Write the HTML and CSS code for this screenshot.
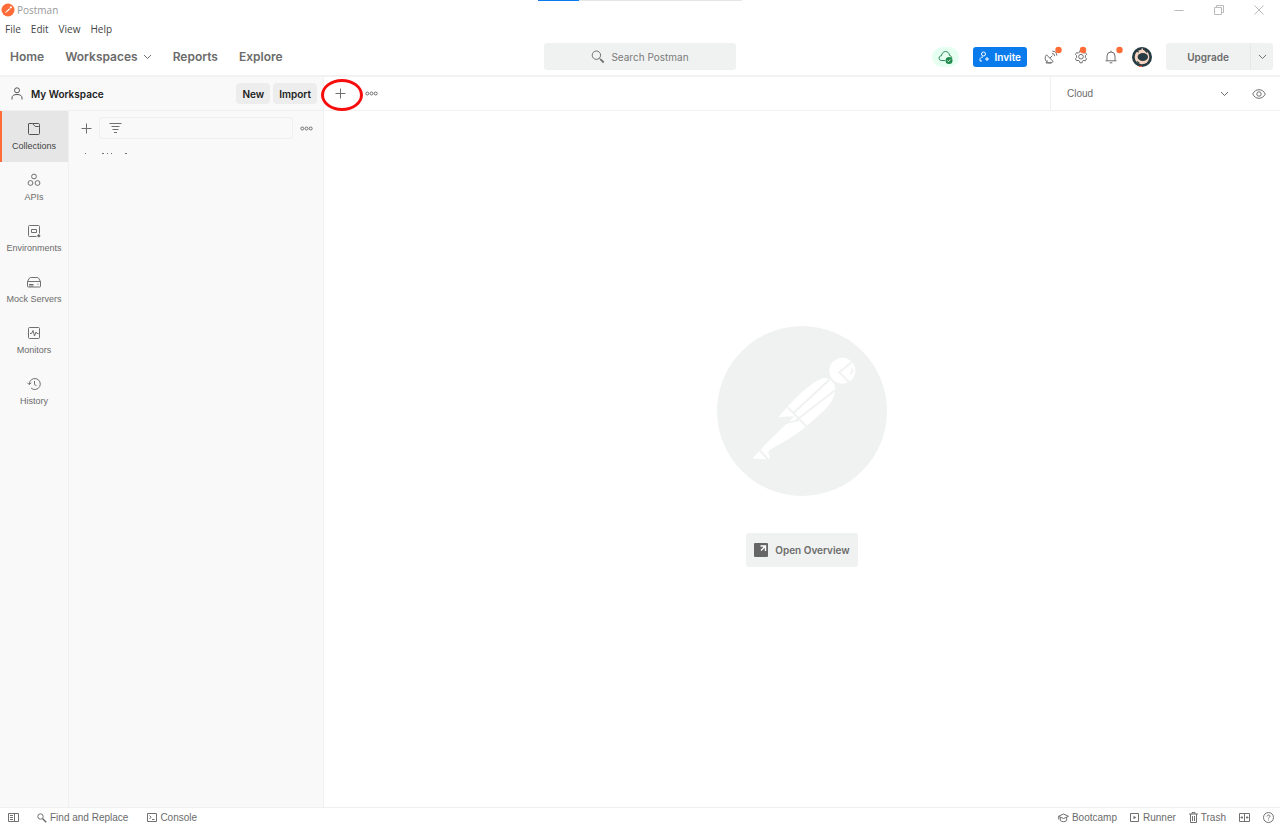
FILE: index.html
```
<!DOCTYPE html>
<html lang="en">
<head>
<meta charset="utf-8">
<title>Postman</title>
<link rel="stylesheet" href="styles.css">
</head>
<body>
<div class="app">
  <div class="load-bar"><div class="load-bar-fill"></div></div>

  <header class="titlebar">
    <svg class="app-logo" width="14" height="14" viewBox="0 0 14 14"><circle cx="7" cy="7" r="6.5" fill="#ff6c37"/><path d="M3.6 10.4 5.2 8.3 8.2 5.2 9.2 6.2 6.2 8.7Z" fill="#fff"/><circle cx="9.8" cy="4.3" r="1.1" fill="#fff"/></svg>
    <span class="app-title">Postman</span>
    <div class="window-controls">
      <button aria-label="Minimize"><svg width="10" height="10" viewBox="0 0 10 10"><path d="M.5 5.5h9"/></svg></button>
      <button aria-label="Restore"><svg width="10" height="10" viewBox="0 0 10 10"><path d="M.5 2.500h7v7h-7zM2.500 2.500v-2h7v7h-2"/></svg></button>
      <button aria-label="Close"><svg width="10" height="10" viewBox="0 0 10 10"><path d="m.5.5 9 9m0-9-9 9"/></svg></button>
    </div>
  </header>

  <div class="menubar">
    <button>File</button><button>Edit</button><button>View</button><button>Help</button>
  </div>

  <nav class="topnav">
    <div class="nav-links">
      <a href="#">Home</a>
      <button class="nav-drop">Workspaces <svg width="9" height="6" viewBox="0 0 9 6"><path d="m1 1 3.500 3.500L8 1"/></svg></button>
      <a href="#">Reports</a>
      <a href="#">Explore</a>
    </div>
    <button class="search">
      <svg width="14" height="14" viewBox="0 0 14 14"><circle cx="5.400" cy="5.200" r="4.200"/><path d="m8.400 8.200 1.200 1.200"/><path d="m9.300 9.100 3.400 3.400" stroke-width="1.800"/></svg>
      Search Postman
    </button>
    <div class="nav-tools">
      <button class="sync" aria-label="Sync status"><svg width="15" height="14" viewBox="0 0 15 14"><path d="M7 10.500H3.200a2.400 2.400 0 0 1-.4-4.700h.7C3.700 3.300 5.400 1.500 7.500 1.500c2.200 0 3.900 1.700 4 4 1.300.2 2.300 1.100 2.300 2.500" fill="none" stroke="#2f8a5b"/><circle cx="11" cy="10.500" r="3.500" fill="#1f8a4c" stroke="none"/><path d="m9.400 10.500 1.200 1.200 2-2.100" fill="none" stroke="#d8f5e5"/></svg></button>
      <button class="invite"><svg width="11" height="11" viewBox="0 0 11 11"><circle cx="4.500" cy="3" r="2"/><path d="M1 10V8.500c0-1.600 1.200-2.500 3-2.500M1 10h2M6 8h4M8 6v4"/></svg>Invite</button>
      <div class="tool-icons">
        <button aria-label="Capture requests"><svg width="14" height="14" viewBox="0 0 14 14"><path d="M2.500 4.800a4.300 4.300 0 0 0 6.700 6.700ZM5.800 8.200 8.300 5.700M3.500 10.500 2 13h5.500L6.500 11.800M8 3.500a2.500 2.500 0 0 1 2.600 2.600M8.400 1.200a4.500 4.500 0 0 1 4.400 4.400"/><circle class="dot" cx="14.500" cy="0" r="3.200"/></svg></button>
        <button aria-label="Settings"><svg width="14" height="14" viewBox="0 0 14 14"><path d="M5.600 2.200 5.900.7h2.200l.3 1.500 1.500.9 1.500-.5 1.200 1.900L11.400 5.600v2l1.200 1.200-1.200 2-1.500-.5-1.500.9-.3 1.600H5.900l-.3-1.600-1.500-.9-1.500.5-1.200-2 1.200-1.200v-2L1.400 4.500l1.200-1.900 1.500.5Z"/><circle cx="7" cy="6.700" r="2.300"/><circle class="dot" cx="9" cy="0" r="3.200"/></svg></button>
        <button aria-label="Notifications"><svg width="14" height="14" viewBox="0 0 14 14"><path d="M1.500 10.800h11M3 10.800V6a3.700 3.700 0 0 1 8 0v4.800M7 2.200V.7M5.700 12.800h2.600"/><circle class="dot" cx="15.500" cy="0" r="3.200"/></svg></button>
      </div>
      <button class="avatar" aria-label="Account"><svg width="20" height="20" viewBox="0 0 20 20"><circle cx="10" cy="10" r="10" fill="#263b42"/><circle cx="10" cy="10" r="7.300" fill="#f7d5c2"/><ellipse cx="10.800" cy="10" rx="5.200" ry="4" fill="#263b42"/><path d="M3.500 4 7 5M12.500 2.500 15 5.500M5 14.500l2.500 2" stroke="#263b42" stroke-width="1.200"/><path d="M9.500 2.500h1.500" stroke="#f7d5c2" stroke-width="2"/><path d="M7 19.400h3" stroke="#f15a3d" stroke-width="1.200"/></svg></button>
      <div class="upgrade"><button class="upgrade-main">Upgrade</button><button class="upgrade-more" aria-label="More plans"><svg width="9" height="6" viewBox="0 0 9 6"><path d="m1 1 3.500 3.500L8 1"/></svg></button></div>
    </div>
  </nav>

  <div class="workbench">
    <aside class="sidebar">
      <div class="workspace-head">
        <svg width="12" height="13" viewBox="0 0 12 13"><circle cx="6" cy="3.300" r="2.500"/><path d="M1 12.500V11c0-2.300 1.800-3.500 5-3.500s5 1.200 5 3.500v1.500"/></svg>
        <h1>My Workspace</h1>
        <button class="chip">New</button>
        <button class="chip">Import</button>
      </div>
      <div class="sidebar-body">
        <nav class="rail">
          <a class="rail-item active" href="#"><svg width="14" height="14" viewBox="0 0 14 14"><path d="M1.500 2v9.500c0 .6.400 1 1 1h9c.6 0 1-.4 1-1V5.500c0-.6-.4-1-1-1H8.300L5.500 1.500H2c-.3 0-.5.200-.5.500ZM5.500 1.500h6c.6 0 1 .4 1 1v3"/></svg>Collections</a>
          <a class="rail-item" href="#"><svg width="14" height="14" viewBox="0 0 14 14"><circle cx="7" cy="3.500" r="2.400"/><circle cx="3.500" cy="10" r="2.400"/><circle cx="10.500" cy="10" r="2.400"/></svg>APIs</a>
          <a class="rail-item" href="#"><svg width="14" height="14" viewBox="0 0 14 14"><path d="M9.500 12.500h-7c-.6 0-1-.4-1-1v-9c0-.6.400-1 1-1h9c.6 0 1 .4 1 1v7M4.500 5.500h5v3h-5z"/><circle cx="11.800" cy="11.800" r="1.100" fill="#555"/></svg>Environments</a>
          <a class="rail-item" href="#"><svg width="14" height="14" viewBox="0 0 14 14"><path d="M.5 6.500h13v4.800c0 .5-.3.700-.7.700H1.200c-.4 0-.7-.2-.7-.7ZM.5 6.500l2-3.500c.2-.4.500-.5 1-.5h7c.5 0 .8.100 1 .5l2 3.500M2 9.500h4.500M2 11h4.500M10.500 9.200h1"/></svg>Mock Servers</a>
          <a class="rail-item" href="#"><svg width="14" height="14" viewBox="0 0 14 14"><rect x="1.500" y="1.500" width="11" height="11" rx="1"/><path d="M3 7.500h1.500L6 4.500l1.500 5.500L9 6l1 1.500h1.500"/></svg>Monitors</a>
          <a class="rail-item" href="#"><svg width="14" height="14" viewBox="0 0 14 14"><path d="M2.300 7a5.500 5.500 0 1 1 1.800 4.100M.3 5.700l2 2 2-2M7.500 4v3.500l2 1.200"/></svg>History</a>
        </nav>
        <section class="collections" aria-label="Collections">
          <div class="filter-row">
            <button aria-label="New collection"><svg width="11" height="11" viewBox="0 0 11 11"><path d="M5.500.5v10M.5 5.500h10"/></svg></button>
            <label class="filter"><svg width="13" height="11" viewBox="0 0 13 11"><path d="M.5.500h12M2.500 3.500h8M3.500 6.500h6M5 9.500h3"/></svg><input type="text" aria-label="Filter collections"></label>
            <button aria-label="Collection options"><svg width="13" height="5" viewBox="0 0 13 5"><circle cx="2.300" cy="2.500" r="1.500"/><circle cx="6.500" cy="2.500" r="1.500"/><circle cx="10.700" cy="2.500" r="1.500"/></svg></button>
          </div>
          <svg class="clipped-row" width="44" height="3" viewBox="0 0 44 3"><path d="M1 1.500h1M18 1.500h2M23 1.500h1M27 1.500h1M41 1.500h2"/></svg>
        </section>
      </div>
    </aside>

    <main class="main">
      <div class="tabbar">
        <div class="tab-actions">
          <button class="new-tab" aria-label="New tab"><svg width="11" height="11" viewBox="0 0 11 11"><path d="M5.500.5v10M.5 5.500h10"/></svg><span class="callout"></span></button>
          <button aria-label="Tab options"><svg width="13" height="5" viewBox="0 0 13 5"><circle cx="2.300" cy="2.500" r="1.500"/><circle cx="6.500" cy="2.500" r="1.500"/><circle cx="10.700" cy="2.500" r="1.500"/></svg></button>
        </div>
        <div class="environment">
          <select aria-label="Environment"><option>Cloud</option></select>
          <svg class="env-arrow" width="9" height="6" viewBox="0 0 9 6"><path d="m1 1 3.500 3.500L8 1"/></svg>
          <button aria-label="Environment quick look"><svg width="14" height="10" viewBox="0 0 14 10"><path d="M.7 5C2 2.300 4.300.7 7 .7S12 2.300 13.300 5C12 7.700 9.700 9.300 7 9.300S2 7.700.7 5Z"/><circle cx="7" cy="5" r="2.200"/></svg></button>
        </div>
      </div>
      <div class="empty">
        <svg class="emblem" width="170" height="170" viewBox="50 47 510 510">
          <circle cx="305" cy="302" r="255" fill="#f0f2f1"/>
          <g fill="#fff">
            <circle cx="426" cy="181" r="39"/>
            <path d="M234 320 262 289C296 251 333 218 366 204 382 200 401 212 404 229 407 261 388 288 353 317L307 357C281 378 244 399 207 419L204 425 209 447 156 445 203 394 258 341 297 331 268 333 281 318Z"/>
          </g>
          <g fill="none" stroke="#f0f2f1" stroke-width="6">
            <path d="M457 153 417 186 449 218M262 291 319 349M387 208 277 310M405 239 284 333M178 420 205 449"/>
            <path d="M449 191c7-4 8-9 5-16" stroke-width="5"/>
            <path d="m257 338 40-9" stroke-width="5"/>
          </g>
        </svg>
        <button class="overview"><svg width="14" height="14" viewBox="0 0 14 14"><rect width="14" height="14" rx="1" fill="#666"/><path d="M6.500 3h5v5M11.500 3l-4.500 4.500" stroke="#fff" fill="none" stroke-width="1.400"/></svg>Open Overview</button>
      </div>
    </main>
  </div>

  <footer class="statusbar">
    <button aria-label="Toggle sidebar"><svg width="11" height="10" viewBox="0 0 11 10"><path d="M.5.500h10v8H.5zM6.500.500v8M2 2.500h3M2 4.500h3M2 6.500h3"/></svg></button>
    <button class="find"><svg width="10" height="10" viewBox="0 0 10 10"><circle cx="3.500" cy="3.500" r="2.700"/><path d="m5.700 5.700 3.500 3.500" stroke-width="1.600"/></svg>Find and Replace</button>
    <button class="console"><svg width="10" height="10" viewBox="0 0 10 10"><path d="M.5.500h9v8h-9zM2.500 2.500 4 4.200 2.500 6M5 6.500h2.500"/></svg>Console</button>
    <div class="status-right">
      <button><svg width="11" height="10" viewBox="0 0 11 10"><path d="M.5 3.300 5.500 1l5 2.300-5 2.200ZM2.300 4.200v3.300c2 1.600 4.400 1.600 6.400 0V4.200M.7 3.500v3"/></svg>Bootcamp</button>
      <button><svg width="10" height="10" viewBox="0 0 10 10"><path d="M.5.500h8v8h-8z"/><path d="M3.500 2.700 6.300 4.500 3.500 6.300Z" fill="#666" stroke="none"/></svg>Runner</button>
      <button><svg width="9" height="11" viewBox="0 0 9 11"><path d="M0 2h9M3 2V.6h3V2M1.500 2v8.500h6V2M3.500 4v5M5.500 4v5"/></svg>Trash</button>
      <button aria-label="Two-pane view"><svg width="11" height="10" viewBox="0 0 11 10"><path d="M.5.500h10v8H.5zM5.500.500v8M1.500 4.500h2.500M7 4.500h2.500M3 3.200v2.600M8 3.200v2.600"/></svg></button>
      <button class="help" aria-label="Help"><svg width="11" height="11" viewBox="0 0 11 11"><circle cx="5.500" cy="5.500" r="5"/><path d="M4 4.500C4 2.500 7 2.500 7 4.300c0 1-1.500 1-1.500 2.200M5.500 7.500v1"/></svg></button>
    </div>
  </footer>
</div>
</body>
</html>
```
FILE: styles.css
```
* { box-sizing: border-box; }
body { margin: 0; background: #fff; color: #6b6b6b; font-family: Inter, "Liberation Sans", sans-serif; font-size: 10px; }
button, input, select { font: inherit; color: inherit; background: none; border: 0; padding: 0; margin: 0; }
button { display: inline-flex; align-items: center; justify-content: center; white-space: nowrap; }
a { color: inherit; text-decoration: none; }
svg { display: block; flex: none; overflow: visible; fill: none; stroke: #707070; }
svg.app-logo, svg.emblem, .avatar svg, .overview svg { stroke: none; }

.app { min-height: 100vh; display: flex; flex-direction: column; position: relative; }
.load-bar { position: absolute; top: 0; left: 42%; width: 16%; height: 1px; background: #e6e6e6; }
.load-bar-fill { width: 20%; height: 1px; background: #097bed; }

.titlebar { height: 20px; display: flex; align-items: center; padding: 0 1px; gap: 2px; font-family: "Open Sans", sans-serif; color: #999; }
.window-controls { margin-left: auto; display: flex; }
.window-controls button { width: 40px; height: 18px; }
.window-controls svg { stroke: #bbb; }
.menubar { height: 18px; display: flex; align-items: center; gap: 10px; padding: 0 5px; font-family: "Open Sans", sans-serif; color: #444; }

.topnav { height: 39px; display: grid; grid-template-columns: 1fr 15% 1fr; align-items: center; border-bottom: 2px solid #f2f2f2; }
.nav-links { display: flex; gap: 21px; padding-left: 10px; font-size: 12px; font-weight: 600; }
.nav-drop { gap: 5px; }
.search { height: 27px; gap: 6px; background: #f0f2f1; border-radius: 3px; color: #7a7a7a; }
.nav-tools { display: flex; align-items: center; justify-content: flex-end; gap: 14px; padding-right: 7px; }
.sync { width: 27px; height: 20px; border-radius: 10px; background: #e5fff1; }
.invite { height: 20px; padding: 0 6px; gap: 4px; border-radius: 3px; background: #097bed; color: #fff; font-weight: 600; }
.invite svg { stroke: #fff; }
.tool-icons { display: flex; gap: 16px; padding-left: 3px; }
.dot { fill: #ff6c37; stroke: none; }
.upgrade { height: 27px; display: flex; background: #f0f2f1; border-radius: 3px; font-weight: 600; }
.upgrade-main { width: 85px; border-right: 1px solid #e6e8e7; }
.upgrade-more { width: 22px; }

.workbench { flex: 1; display: flex; }
.sidebar { width: 324px; flex: none; display: flex; flex-direction: column; background: #f9f9f9; border-right: 1px solid #f0f0f0; }
.workspace-head { height: 34px; display: flex; align-items: center; gap: 3px; padding: 0 6px 0 11px; border-bottom: 1px solid #f0f0f0; }
.workspace-head h1 { margin: 0 auto 0 5px; font-size: 10px; font-weight: 600; color: #212121; }
.workspace-head svg { stroke: #555; }
.chip { height: 21px; padding: 0 6px; border-radius: 4px; background: #ededed; color: #212121; font-weight: 600; }
.sidebar-body { flex: 1; display: flex; }
.rail { width: 69px; flex: none; border-right: 1px solid #f0f0f0; font-family: "Liberation Sans", Arial, sans-serif; }
.rail-item { height: 51px; display: flex; flex-direction: column; align-items: center; justify-content: center; gap: 5px; padding-bottom: 1px; font-size: 9px; line-height: 10px; white-space: nowrap; }
.rail-item.active { background: #e6e6e6; box-shadow: inset 2px 0 #ff6c37; color: #444; }
.active svg { stroke: #555; }
.collections { flex: 1; padding: 6px 10px 0 12px; }
.filter-row { display: flex; align-items: center; gap: 7px; }
.filter { flex: 1; height: 22px; display: flex; align-items: center; padding: 0 9px; border: 1px solid #f0f0f0; border-radius: 3px; }
.filter input { flex: 1; min-width: 0; outline: 0; }
.clipped-row { margin: 13px 0 0 3px; }

.main { flex: 1; display: flex; flex-direction: column; min-width: 0; }
.tabbar { height: 34px; display: flex; justify-content: space-between; border-bottom: 1px solid #f2f2f2; }
.tab-actions { display: flex; align-items: center; gap: 19px; padding-left: 11px; }
.new-tab { position: relative; }
.callout { position: absolute; left: -14px; top: -9px; width: 42px; height: 32px; border: 3px solid #f80d0d; border-radius: 50%; }
.environment { width: 230px; display: flex; align-items: center; border-left: 1px solid #f0f0f0; padding: 0 14px 0 16px; }
.environment select { flex: 1; appearance: none; font-family: "Liberation Sans", Arial, sans-serif; }
.env-arrow { margin-right: 23px; pointer-events: none; }
.empty { flex: 1; display: flex; flex-direction: column; align-items: center; justify-content: center; gap: 37px; padding-bottom: 26px; }
.overview { height: 34px; padding: 0 8px; gap: 7px; background: #f0f2f1; border-radius: 3px; font-weight: 600; }

.statusbar { height: 20px; display: flex; align-items: center; padding: 0 6px 0 8px; border-top: 1px solid #f0f0f0; font-family: "Liberation Sans", Arial, sans-serif; }
.statusbar button { gap: 3px; }
.find { margin: 0 19px 0 18px; }
.status-right { margin-left: auto; display: flex; align-items: center; gap: 13px; }
```
